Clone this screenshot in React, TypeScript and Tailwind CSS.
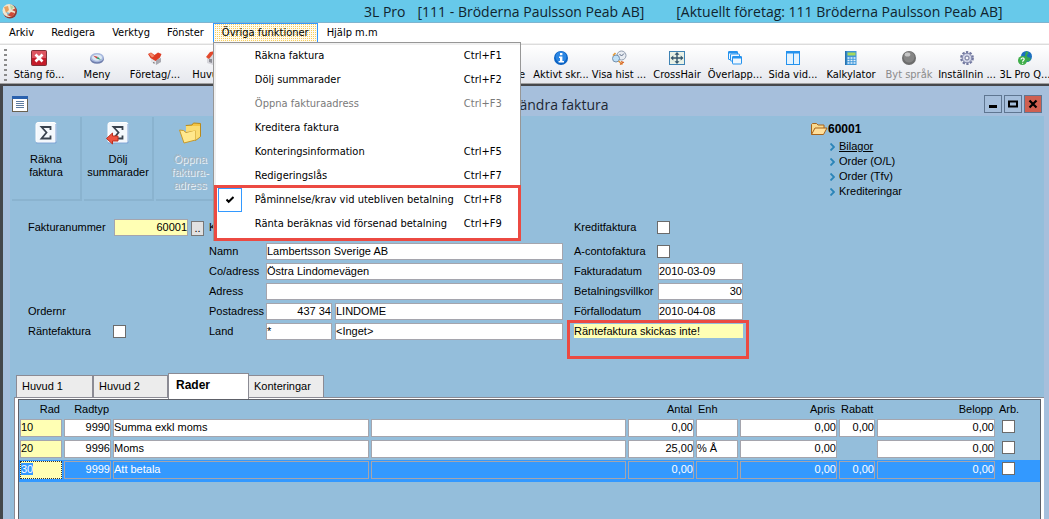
import { useEffect, useRef, type ReactNode } from 'react'

type ToolItem = { label: string; icon: ReactNode; disabled?: boolean }

const closeIcon = (
  <svg width="16" height="16" viewBox="0 0 16 16">
    <rect x="0.5" y="0.5" width="15" height="15" rx="1" fill="#c41c2a" stroke="#7d3037" />
    <rect x="1" y="1" width="14" height="7" fill="#dd5560" />
    <path d="M4.5 4.5l7 7M11.5 4.5l-7 7" stroke="#fff" strokeWidth="2.6" />
  </svg>
)

const compassIcon = (
  <svg width="16" height="16" viewBox="0 0 16 16">
    <ellipse cx="8" cy="9" rx="7" ry="4.8" fill="#6f7eac" />
    <ellipse cx="8" cy="7.6" rx="6.8" ry="4.6" fill="#a9b9de" />
    <ellipse cx="8" cy="7.6" rx="5" ry="3.2" fill="#dce9f4" />
    <path d="M4 5.5l5 1.5-1.4 1.6z" fill="#cf3a33" />
    <path d="M12 10L7.5 8.6 9 7z" fill="#2c9a63" />
  </svg>
)

const heartHouseIcon = (
  <svg width="16" height="16" viewBox="0 0 16 16">
    <path d="M4 8l5-2 5 2v4l-5 3-5-3z" fill="#e4e4e8" />
    <path d="M9 10l5-2v4l-5 3z" fill="#a8a8b0" />
    <path d="M1 4l3-1.5L7.5 5 11 2.5 14.5 4 13 7.5 8.5 11 3.5 8z" fill="#dd3a22" />
    <path d="M2 4l2-1 3.5 3L5 7.5z" fill="#f58a6a" />
    <path d="M6 12h1.5v2L6 13z" fill="#888" />
  </svg>
)

const houseIcon = (
  <svg width="16" height="16" viewBox="0 0 16 16">
    <path d="M2 7l6-4 6 4v6l-6 2-6-2z" fill="#d6d6dc" />
    <path d="M1 7l4-5 5-1 5 6-4 1-3-4-4 5z" fill="#e2492c" />
    <path d="M4 9h3v4l-3-1z" fill="#8e8e96" />
  </svg>
)

const infoIcon = (
  <svg width="16" height="16" viewBox="0 0 16 16">
    <circle cx="8" cy="8" r="7" fill="#0a62c4" />
    <circle cx="8" cy="7" r="5.5" fill="#2b86e3" />
    <rect x="7" y="3" width="2.4" height="2.2" fill="#fff" />
    <path d="M6 6.5h3.4V11H11v1.5H5.6V11H7V8H6z" fill="#fff" />
  </svg>
)

const historyIcon = (
  <svg width="16" height="16" viewBox="0 0 16 16">
    <circle cx="10.5" cy="5.5" r="4.5" fill="#e8ecf2" stroke="#909cae" />
    <path d="M8.5 4l2 2 2.5-2.5" fill="none" stroke="#5a6b86" />
    <circle cx="5" cy="8.5" r="3.5" fill="#bfe0f7" stroke="#738fae" />
    <path d="M2 5.5L4.5 3M7.5 11l4 3.5" stroke="#e29a3a" strokeWidth="1.6" />
    <path d="M10 11.5l3 1M9 14.5l3-2" stroke="#d8672b" strokeWidth="1.3" />
  </svg>
)

const crossHairIcon = (
  <svg width="16" height="16" viewBox="0 0 16 16">
    <rect x="0.5" y="1.5" width="15" height="13" fill="#e9f1e6" stroke="#3f83b4" />
    <path d="M8 3v10M3 8h10" stroke="#34566c" strokeWidth="1.4" />
    <path d="M8 2l2.5 2.8h-5zM8 14l2.5-2.8h-5zM1.5 8l2.8-2.5v5zM14.5 8l-2.8-2.5v5z" fill="#34566c" />
  </svg>
)

const cascadeIcon = (
  <svg width="16" height="16" viewBox="0 0 16 16" fill="#eef7ff" stroke="#2492ee">
    <rect x="1.5" y="1.5" width="9" height="8" rx="0.5" />
    <path d="M1.5 2.5h9" strokeWidth="2" />
    <rect x="3.5" y="4" width="9" height="7" rx="0.5" />
    <rect x="5.5" y="6.5" width="9" height="7.5" rx="0.5" />
    <path d="M5.5 7.5h9" strokeWidth="2" />
  </svg>
)

const tileIcon = (
  <svg width="16" height="16" viewBox="0 0 16 16" stroke="#2492ee">
    <rect x="1.5" y="1.5" width="13" height="13" fill="#e4f2fd" />
    <path d="M1.5 2.5h13" strokeWidth="2" />
    <path d="M8.5 3v11" />
  </svg>
)

const calculatorIcon = (
  <svg width="16" height="16" viewBox="0 0 16 16">
    <path d="M2 1h11.5v14H2z" fill="#3f96d8" />
    <path d="M2 1h1.5v14H2z" fill="#2873ae" />
    <path d="M4.5 2.5h8v3h-8z" fill="#a6d95b" />
    <path d="M4.5 8h8M4.5 10.5h8M4.5 13h8" stroke="#e7f3fb" strokeWidth="1.4" strokeDasharray="2 1" />
  </svg>
)

const ballIcon = (
  <svg width="16" height="16" viewBox="0 0 16 16">
    <circle cx="8" cy="8" r="7" fill="#6c6c6c" />
    <circle cx="8" cy="7" r="5.5" fill="#858585" />
    <ellipse cx="6.5" cy="4.5" rx="2.8" ry="2" fill="#c6c6c6" />
  </svg>
)

const gearIcon = (
  <svg width="16" height="16" viewBox="0 0 16 16">
    <circle cx="8" cy="8" r="5.8" fill="none" stroke="#7278a0" strokeWidth="2.2" strokeDasharray="2.3 1.35" />
    <circle cx="8" cy="8" r="4.8" fill="#d0d3e6" stroke="#8086aa" />
    <circle cx="8" cy="8" r="2" fill="#f7f8fb" stroke="#6f759a" />
  </svg>
)

const globeHelpIcon = (
  <svg width="16" height="16" viewBox="0 0 16 16">
    <circle cx="9.5" cy="6.5" r="5.5" fill="#1b6fc0" />
    <path d="M9 1.5c3 0 3 2 1.5 3s0 3 2 3 1 4-1 4-4-2-4-4z" fill="#37a653" />
    <circle cx="5.5" cy="10.5" r="4.5" fill="#3fae49" />
    <path d="M4 9.5c0-2 3.2-2 3.2-.2 0 1.2-1.6 1.1-1.6 2.4M5.6 12.7v1" stroke="#fff" strokeWidth="1.2" fill="none" />
  </svg>
)

const toolsLeft: ToolItem[] = [
  { label: 'Stäng fö...', icon: closeIcon },
  { label: 'Meny', icon: compassIcon },
  { label: 'Företag/...', icon: heartHouseIcon },
  { label: 'Huvud...', icon: houseIcon },
]

const toolsRight: ToolItem[] = [
  { label: 'Aktivt skr...', icon: infoIcon },
  { label: 'Visa hist ...', icon: historyIcon },
  { label: 'CrossHair', icon: crossHairIcon },
  { label: 'Överlapp...', icon: cascadeIcon },
  { label: 'Sida vid...', icon: tileIcon },
  { label: 'Kalkylator', icon: calculatorIcon },
  { label: 'Byt språk', icon: ballIcon, disabled: true },
  { label: 'Inställnin ...', icon: gearIcon },
  { label: '3L Pro Q...', icon: globeHelpIcon },
]

const menuItems = [
  { label: 'Räkna faktura', keys: 'Ctrl+F1' },
  { label: 'Dölj summarader', keys: 'Ctrl+F2' },
  { label: 'Öppna fakturaadress', keys: 'Ctrl+F3', disabled: true },
  { label: 'Kreditera faktura', keys: '' },
  { label: 'Konteringsinformation', keys: 'Ctrl+F5' },
  { label: 'Redigeringslås', keys: 'Ctrl+F7' },
]

const menuItemsMarked = [
  { label: 'Påminnelse/krav vid utebliven betalning', keys: 'Ctrl+F8', checked: true },
  { label: 'Ränta beräknas vid försenad betalning', keys: 'Ctrl+F9' },
]

const rows = [
  { rad: '10', typ: '9990', text: 'Summa exkl moms', antal: '0,00', enh: '', apris: '0,00', rabatt: '0,00', belopp: '0,00' },
  { rad: '20', typ: '9996', text: 'Moms', antal: '25,00', enh: '% Å', apris: '0,00', rabatt: null, belopp: '0,00' },
  { rad: '30', typ: '9999', text: 'Att betala', antal: '0,00', enh: '', apris: '0,00', rabatt: '0,00', belopp: '0,00', active: true },
]

function MenuRow({ label, keys, disabled, checked }: { label: string; keys: string; disabled?: boolean; checked?: boolean }) {
  return (
    <button
      role={checked ? 'menuitemcheckbox' : 'menuitem'}
      aria-checked={checked}
      disabled={disabled}
      className="flex h-6 w-full items-center pr-[18px] text-left disabled:text-[#7a7a7a]"
    >
      <span className="flex w-[41px] shrink-0 pl-1">
        {checked && (
          <span className="flex size-6 items-center justify-center border border-[#3399ff]">
            <svg width="8" height="8" viewBox="0 0 8 8">
              <path d="M0.5 3.5l2.2 2.3L7.5 1" fill="none" stroke="#000" strokeWidth="2" />
            </svg>
          </span>
        )}
      </span>
      <span className="grow whitespace-nowrap">{label}</span>
      <span className="w-[38px] whitespace-nowrap">{keys}</span>
    </button>
  )
}

function ExtraMenu() {
  return (
    <div role="menu" className="absolute top-full left-0 z-10 -mt-px w-[308px] border border-[#979797] bg-white pt-px shadow-[inset_2px_2px_0_#f0f0f0]">
      {menuItems.map((m) => (
        <MenuRow key={m.label} {...m} />
      ))}
      <div className="-mt-[3px] -mr-px -mb-px border-3 border-[#ec4a42] pb-0.5">
        <div className="-mr-0.5 -ml-[3px]">
          {menuItemsMarked.map((m) => (
            <MenuRow key={m.label} {...m} />
          ))}
        </div>
      </div>
    </div>
  )
}

function MenuBar() {
  return (
    <nav className="flex h-5 gap-px bg-white pl-px">
      {['Arkiv', 'Redigera', 'Verktyg', 'Fönster'].map((m) => (
        <button key={m} className="px-2">{m}</button>
      ))}
      <div className="relative">
        <button
          aria-expanded="true"
          className="h-5 border border-[#3399ff] bg-[conic-gradient(#f7cf57_25%,#fffaf0_0)] bg-[length:2px_2px] px-2"
        >
          Övriga funktioner
        </button>
        <ExtraMenu />
      </div>
      <button className="px-2">Hjälp m.m</button>
    </nav>
  )
}

function ToolButton({ label, icon, disabled }: ToolItem) {
  return (
    <button disabled={disabled} className="flex w-[58px] shrink-0 flex-col items-center pt-1 whitespace-nowrap disabled:text-[#8b8b8b]">
      <span className="flex h-[18px] items-center">{icon}</span>
      <span className="leading-4">{label}</span>
    </button>
  )
}

function Toolbar() {
  return (
    <div className="flex h-[39px] overflow-hidden border-t border-[#dcdcdc] bg-linear-to-b from-white to-[#e6e8ee]">
      <div className="mt-1 mr-[3px] ml-1 h-8 w-[3px] shrink-0 bg-[linear-gradient(#8b8b8b_50%,transparent_0)] bg-[length:3px_5px]" />
      {toolsLeft.map((t) => (
        <ToolButton key={t.label} {...t} />
      ))}
      <button className="w-[283px] shrink-0 pt-[22px] text-right leading-4">e</button>
      <div className="w-[7px] shrink-0" />
      {toolsRight.map((t) => (
        <ToolButton key={t.label} {...t} />
      ))}
    </div>
  )
}

function SigmaIcon({ arrow }: { arrow?: boolean }) {
  return (
    <svg width="24" height="24" viewBox="0 0 24 24">
      <rect x="2" y="1.5" width="20" height="20" rx="2" fill="#f4f8fc" stroke="#fff" />
      <path d="M2 22h20V3" fill="none" stroke="#7fa3d6" />
      <path d="M16.5 9V6h-9l5 5.5-5 6h9v-3" fill="none" stroke="#39424e" strokeWidth="1.8" />
      {arrow && <path d="M0.5 17.5l6-5.5v3H12v5H6.5v3z" fill="#ef5340" stroke="#b9301f" />}
    </svg>
  )
}

function FolderIcon() {
  return (
    <svg width="24" height="24" viewBox="0 0 24 24">
      <path d="M8 4.5l6-.5 1.5-2 7 .5v13l-5 4z" fill="#f3c443" stroke="#b98a1c" />
      <path d="M1.5 9l4 .5L8 11.5 17.5 9V19L6 22z" fill="#ffe88d" stroke="#c79a2c" />
      <path d="M8 5v6l9.5-1.5V19l4.5-3.5V5z" fill="#fbdd73" />
    </svg>
  )
}

function OpenFolderIcon() {
  return (
    <svg width="18" height="14" viewBox="0 0 18 14">
      <path d="M1.5 12.5v-10l1-1h4L8 3h6v3" fill="#f9d98e" stroke="#a8641a" />
      <path d="M1.5 12.5L5 6h12l-3.5 6.5z" fill="#ffdf9a" stroke="#a8641a" />
    </svg>
  )
}

function ActionButton({ lines, icon, disabled }: { lines: string[]; icon: ReactNode; disabled?: boolean }) {
  return (
    <button
      disabled={disabled}
      className="flex h-[84px] w-[70px] flex-col items-center border-r-2 border-b-2 border-[#8ab3cf] pt-1 leading-[13px] disabled:text-[#a3b4c2] disabled:[text-shadow:1px_1px_0_#eef4f8]"
    >
      {icon}
      <span className="mt-2">
        {lines.map((l) => (
          <span key={l} className="block">{l}</span>
        ))}
      </span>
    </button>
  )
}

function Field({ label, labelWidth, children }: { label: string; labelWidth: string; children?: ReactNode }) {
  return (
    <label className="flex h-[17px] items-center whitespace-nowrap">
      <span className={'shrink-0 ' + labelWidth}>{label}</span>
      {children}
    </label>
  )
}

const box = 'h-[17px] min-w-0 border border-[#a5a5ad] bg-white pb-px outline-none'
const check = 'size-[13px] shrink-0 appearance-none border border-[#6b6b6b] bg-white'
const formGrid = 'grid shrink-0 grid-cols-1 grid-rows-[21px_repeat(5,17px)] gap-y-[3px]'

function InvoiceForm() {
  return (
    <div className="flex pt-[18px] pl-[18px]">
      <div className={formGrid + ' w-[181px]'}>
        <div className="flex">
          <Field label="Fakturanummer" labelWidth="w-[86px]">
            <input className="h-[17px] w-[74px] border border-[#a5a5ad] bg-[#ffffb4] pb-px text-right outline-none" defaultValue="60001" />
          </Field>
          <button aria-label="Välj faktura" className="mt-0.5 ml-[3px] h-[15px] w-[13px] border border-[#777] bg-[#e1e1e1] leading-[13px]">..</button>
        </div>
        <div className="row-start-5">
          <Field label="Ordernr" labelWidth="w-[85px]" />
        </div>
        <div className="row-start-6">
          <Field label="Räntefaktura" labelWidth="w-[85px]">
            <input type="checkbox" className={check} />
          </Field>
        </div>
      </div>
      <div className={formGrid + ' w-[354px]'}>
        <Field label="Kundnr" labelWidth="w-[57px]">
          <input className={box + ' w-[66px]'} />
        </Field>
        <Field label="Namn" labelWidth="w-[57px]">
          <input className={box + ' grow'} defaultValue="Lambertsson Sverige AB" />
        </Field>
        <Field label="Co/adress" labelWidth="w-[57px]">
          <input className={box + ' grow'} defaultValue="Östra Lindomevägen" />
        </Field>
        <Field label="Adress" labelWidth="w-[57px]">
          <input className={box + ' grow'} />
        </Field>
        <div className="flex gap-[3px]">
          <Field label="Postadress" labelWidth="w-[57px]">
            <input className={box + ' w-[66px] text-right'} defaultValue="437 34" />
          </Field>
          <input aria-label="Ort" className={box + ' grow'} defaultValue="LINDOME" />
        </div>
        <div className="flex gap-[3px]">
          <Field label="Land" labelWidth="w-[57px]">
            <input className={box + ' w-[66px]'} defaultValue="*" />
          </Field>
          <input aria-label="Landsnamn" className={box + ' grow'} defaultValue="<Inget>" />
        </div>
      </div>
      <div className={formGrid + ' ml-[11px] w-[169px]'}>
        <Field label="Kreditfaktura" labelWidth="w-[83px]">
          <input type="checkbox" className={check} />
        </Field>
        <Field label="A-contofaktura" labelWidth="w-[83px]">
          <input type="checkbox" className={check} />
        </Field>
        <Field label="Fakturadatum" labelWidth="w-[84px]">
          <input className={box + ' grow'} defaultValue="2010-03-09" />
        </Field>
        <Field label="Betalningsvillkor" labelWidth="w-[84px]">
          <input className={box + ' grow text-right'} defaultValue="30" />
        </Field>
        <Field label="Förfallodatum" labelWidth="w-[84px]">
          <input className={box + ' grow'} defaultValue="2010-04-08" />
        </Field>
        <div className="relative pt-px">
          <p className="h-3.5 bg-[#ffffb4] leading-[14px]">Räntefaktura skickas inte!</p>
          <div className="absolute -top-[3px] -left-[7px] h-[39px] w-[182px] border-3 border-[#ec4a42]" />
        </div>
      </div>
    </div>
  )
}

function Cell({ value, label, active, right }: { value: string; label: string; active?: boolean; right?: boolean }) {
  return (
    <td className="px-px py-0 pt-px align-top">
      <input
        aria-label={label}
        defaultValue={value}
        className={
          'block h-[18px] w-full border border-[#a5a5ad] pb-0.5 outline-none ' +
          (active ? 'bg-transparent text-white ' : 'bg-white ') +
          (right ? 'text-right' : '')
        }
      />
    </td>
  )
}

function RowTable() {
  const current = useRef<HTMLInputElement>(null)

  useEffect(() => {
    current.current?.focus()
    current.current?.select()
  }, [])

  return (
    <table className="w-full table-fixed border-collapse">
      <colgroup>
        <col className="w-11" />
        <col className="w-[49px]" />
        <col />
        <col />
        <col className="w-[68px]" />
        <col className="w-11" />
        <col className="w-[99px]" />
        <col className="w-[38px]" />
        <col className="w-[120px]" />
        <col className="w-11" />
      </colgroup>
      <thead>
        <tr className="text-right leading-[18px] [&>th]:px-[3px] [&>th]:font-normal">
          <th>Rad</th>
          <th>Radtyp</th>
          <th></th>
          <th></th>
          <th>Antal</th>
          <th className="text-left">Enh</th>
          <th>Apris</th>
          <th>Rabatt</th>
          <th>Belopp</th>
          <th className="text-left">Arb.</th>
        </tr>
      </thead>
      <tbody>
        {rows.map((r) => (
          <tr key={r.rad} className={r.active ? 'h-[22px] bg-[#3399ff]' : 'h-[21px]'}>
            <td className="px-px py-0 pt-px align-top">
              <input
                ref={r.active ? current : undefined}
                aria-label="Rad"
                defaultValue={r.rad}
                className={
                  'block h-[18px] w-full border bg-[#ffffb4] pb-0.5 outline-none selection:bg-[#3399ff] selection:text-white ' +
                  (r.active ? 'border-dotted border-[#333]' : 'border-[#a5a5ad]')
                }
              />
            </td>
            <Cell label="Radtyp" value={r.typ} active={r.active} right />
            <Cell label="Benämning" value={r.text} active={r.active} />
            <Cell label="Benämning 2" value="" active={r.active} />
            <Cell label="Antal" value={r.antal} active={r.active} right />
            <Cell label="Enh" value={r.enh} active={r.active} />
            <Cell label="Apris" value={r.apris} active={r.active} right />
            {r.rabatt === null ? <td></td> : <Cell label="Rabatt" value={r.rabatt} active={r.active} right />}
            <Cell label="Belopp" value={r.belopp} active={r.active} right />
            <td className="p-0 pt-0.5 pl-1.5 align-top">
              <input type="checkbox" aria-label="Arb." className={'block ' + check} />
            </td>
          </tr>
        ))}
      </tbody>
    </table>
  )
}

const tab = 'h-[22px] border border-b-0 border-[#8b8b94] bg-[#ececec] pl-[5px] text-left'

function Tabs() {
  return (
    <div className="ml-1 flex grow flex-col">
      <div role="tablist" className="ml-0.5 flex items-end">
        <button role="tab" className={tab + ' w-[77px]'}>Huvud 1</button>
        <button role="tab" className={tab + ' w-[75px]'}>Huvud 2</button>
        <button role="tab" aria-selected="true" className="relative -mb-0.5 h-[26px] w-[81px] border border-b-0 border-[#8b8b94] bg-white pb-1 pl-[7px] text-left text-[12px] font-bold">
          Rader
        </button>
        <button role="tab" className={tab + ' w-[75px] border-l-0'}>Konteringar</button>
      </div>
      <div className="flex grow border-t border-l border-[#8b8b94]">
        <div className="grow border-t border-r-3 border-l-3 border-white">
          <div className="h-full border border-b-0 border-[#5d6068]">
            <RowTable />
          </div>
        </div>
      </div>
    </div>
  )
}

function LinkPanel() {
  return (
    <div className="mr-[142px] ml-auto pt-[5px]">
      <div className="flex h-[14px] items-center text-[12px] font-bold">
        <OpenFolderIcon />
        60001
      </div>
      <ul className="mt-[3px] pl-5">
        {['Bilagor', 'Order (O/L)', 'Order (Tfv)', 'Krediteringar'].map((l, i) => (
          <li key={l} className="flex h-[15px] items-center gap-1">
            <svg width="5" height="8" viewBox="0 0 5 8">
              <path d="M0.5 0.5L4 4 0.5 7.5" fill="none" stroke="#2a84b8" strokeWidth="1.8" />
            </svg>
            <a href="#" className={i === 0 ? 'leading-[13px] underline' : 'leading-[13px]'}>{l}</a>
          </li>
        ))}
      </ul>
    </div>
  )
}

function InvoiceWindow() {
  return (
    <main className="flex grow flex-col border-t-2 border-l-3 border-[#45474b] bg-[#a6bfdc] pr-[5px] pl-[7px] font-['Liberation_Sans',Arial,sans-serif] text-[11px]">
      <header className="flex h-[30px] items-center pt-1.5">
        <svg width="16" height="16" viewBox="0 0 16 16" className="ml-0.5">
          <rect x="0.5" y="0.5" width="15" height="15" fill="#fff" stroke="#6a6250" />
          <rect x="0" y="0" width="16" height="3" fill="#2b62ae" />
          <path d="M4 5.5h8M4 7.5h8M4 9.5h8M4 11.5h8" stroke="#5c7ca0" />
        </svg>
        <h1 className="grow pl-[116px] text-center font-['Open_Sans','Noto_Sans',sans-serif] text-[14px] text-[#1d2733]">ändra faktura</h1>
        <div className="mr-0.5 flex gap-0.5 [&>button]:flex [&>button]:size-[18px] [&>button]:items-center [&>button]:justify-center [&>button]:border [&>button]:border-[#5f7691]">
          <button aria-label="Minimera">
            <svg width="10" height="10"><path d="M1 7.5h8" stroke="#000" strokeWidth="3" /></svg>
          </button>
          <button aria-label="Maximera">
            <svg width="10" height="10"><path d="M1 2.5h8v5H1z" fill="none" stroke="#000" strokeWidth="2" /></svg>
          </button>
          <button aria-label="Stäng" className="bg-[#cf5f50]">
            <svg width="10" height="10"><path d="M1.5 1.5l7 7M8.5 1.5l-7 7" stroke="#000" strokeWidth="2.2" /></svg>
          </button>
        </div>
      </header>
      <section className="flex grow flex-col bg-[#94bedb]">
        <div className="flex items-start pt-px">
          <div className="flex gap-0.5 pl-0.5">
            <ActionButton lines={['Räkna', 'faktura']} icon={<SigmaIcon />} />
            <ActionButton lines={['Dölj', 'summarader']} icon={<SigmaIcon arrow />} />
            <ActionButton lines={['Öppna', 'faktura-', 'adress']} icon={<FolderIcon />} disabled />
          </div>
          <LinkPanel />
        </div>
        <InvoiceForm />
        <div className="flex grow flex-col pt-[33px]">
          <Tabs />
        </div>
      </section>
    </main>
  )
}

export default function App() {
  return (
    <div className="flex h-screen flex-col overflow-hidden bg-[#f0f0f0] font-['DejaVu_Sans_Condensed','DejaVu_Sans',Tahoma,sans-serif] text-[11px] text-black">
      <div className="flex h-[23px] shrink-0 items-center border-b border-[#7fb4cf] bg-[#67c9ea] font-['Open_Sans','Noto_Sans',sans-serif] text-[14px] whitespace-nowrap text-[#10242e]">
        <svg width="16" height="16" viewBox="0 0 16 16" className="ml-0.5 shrink-0">
          <circle cx="8" cy="8.5" r="7" fill="#8f3a34" />
          <circle cx="7" cy="7.5" r="6.5" fill="#f1e6cf" />
          <path d="M2 4l4-1 1 4-3 3z" fill="#e7a060" />
          <path d="M8 2l4 2-3 3z" fill="#b5d6a0" />
          <path d="M5 12l4-3 4 1-3 4z" fill="#cf4a37" />
          <path d="M10 7l4-2v4z" fill="#c0503f" />
          <path d="M4 9l4 1-2 2z" fill="#7fb3cf" />
        </svg>
        <span className="ml-[346px]">3L Pro</span>
        <span className="ml-3">[111 - Bröderna Paulsson Peab AB]</span>
        <span className="ml-8">[Aktuellt företag: 111 Bröderna Paulsson Peab AB]</span>
      </div>
      <MenuBar />
      <div className="h-px shrink-0" />
      <Toolbar />
      <div className="h-px shrink-0 bg-[#a0a0a0]" />
      <InvoiceWindow />
    </div>
  )
}
